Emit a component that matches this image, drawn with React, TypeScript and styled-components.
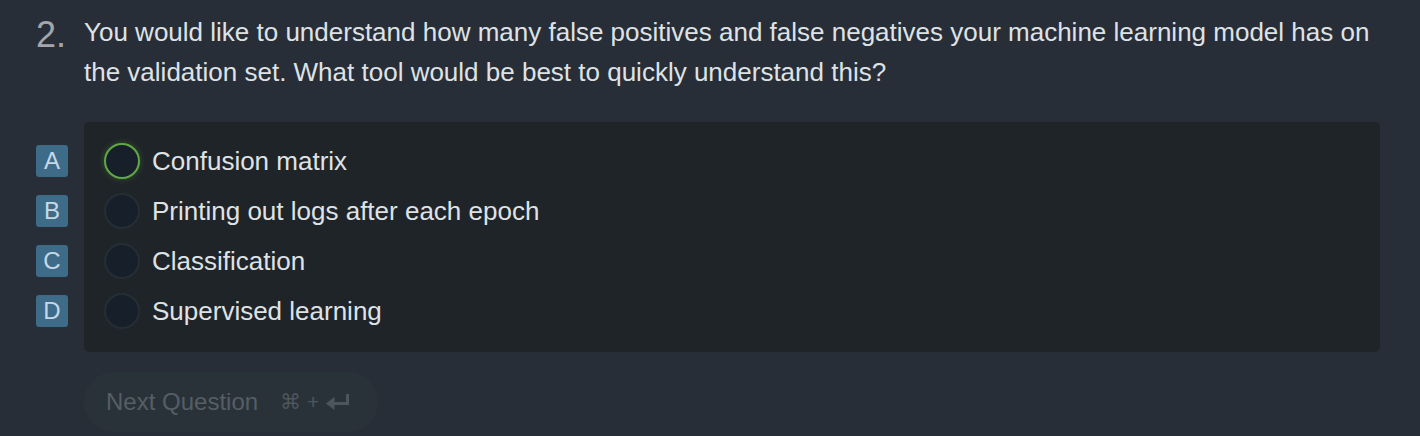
import React from "react";
import styled, { createGlobalStyle } from "styled-components";

const Global = createGlobalStyle`
  html, body { margin: 0; padding: 0; background: #282e37; }
  body { font-family: "Liberation Sans", Arial, Helvetica, sans-serif; }
`;

const Page = styled.div`
  padding: 12px 40px 0 36px;
  display: flex;
  flex-direction: column;
`;

const QuestionRow = styled.div`
  display: grid;
  grid-template-columns: 48px 1fr;
  align-items: start;
`;

const Number = styled.div`
  font-size: 36px;
  line-height: 40px;
  color: #a3a7ab;
  margin-top: 3px;
`;

const QuestionText = styled.p`
  margin: 0;
  font-size: 26px;
  line-height: 40px;
  color: #dfe2e5;
`;

const Options = styled.div`
  display: flex;
  margin-top: 30px;
`;

const Letters = styled.div`
  width: 48px;
  padding-top: 14px;
  display: flex;
  flex-direction: column;
`;

const LetterSlot = styled.div`
  height: 50px;
  display: flex;
  align-items: center;
`;

const Badge = styled.div`
  width: 32px;
  height: 32px;
  border-radius: 3px;
  background: #3e6b88;
  color: #c4d8e6;
  font-size: 24px;
  display: flex;
  align-items: center;
  justify-content: center;
`;

const Panel = styled.div`
  flex: 1;
  background: #1f2428;
  border-radius: 5px;
  padding: 14px 20px 16px;
  display: flex;
  flex-direction: column;
`;

const Row = styled.div`
  height: 50px;
  display: flex;
  align-items: center;
  gap: 12px;
`;

const Radio = styled.div<{ $selected?: boolean }>`
  width: 36px;
  height: 36px;
  box-sizing: border-box;
  border-radius: 50%;
  background: #17202a;
  border: 2px solid ${(p) => (p.$selected ? "#5fa844" : "#262e35")};
  box-shadow: ${(p) => (p.$selected ? "0 0 6px rgba(95,168,68,0.35)" : "none")};
`;

const OptionText = styled.span`
  font-size: 26px;
  color: #dfe2e5;
  margin-top: 1px;
`;

const Button = styled.button`
  margin: 20px 0 0 48px;
  align-self: flex-start;
  height: 60px;
  padding: 0 28px 0 22px;
  border: none;
  border-radius: 30px;
  background: #2a3239;
  display: flex;
  align-items: center;
  gap: 22px;
  font-family: "Liberation Sans", Arial, sans-serif;
  font-size: 24px;
  color: #555e65;
`;

const Shortcut = styled.span`
  display: flex;
  align-items: center;
  gap: 7px;
  font-size: 21px;
  color: #4d565d;
`;

const options = [
  { letter: "A", text: "Confusion matrix", selected: true },
  { letter: "B", text: "Printing out logs after each epoch" },
  { letter: "C", text: "Classification" },
  { letter: "D", text: "Supervised learning" },
];

function ReturnIcon() {
  return (
    <svg width="24" height="17" viewBox="0 0 24 17" fill="none">
      <path d="M21.5 0v9.5H6" stroke="#4d565d" strokeWidth="3" fill="none" />
      <path d="M0 9.5l8.5-6.5v13z" fill="#4d565d" />
    </svg>
  );
}

export default function App() {
  return (
    <>
      <Global />
      <Page>
        <QuestionRow>
          <Number>2.</Number>
          <QuestionText>
            You would like to understand how many false positives and false negatives your machine learning model has on the
            validation set. What tool would be best to quickly understand this?
          </QuestionText>
        </QuestionRow>
        <Options>
          <Letters>
            {options.map((o) => (
              <LetterSlot key={o.letter}>
                <Badge>{o.letter}</Badge>
              </LetterSlot>
            ))}
          </Letters>
          <Panel>
            {options.map((o) => (
              <Row key={o.letter}>
                <Radio $selected={o.selected} />
                <OptionText>{o.text}</OptionText>
              </Row>
            ))}
          </Panel>
        </Options>
        <Button>
          Next Question
          <Shortcut>
            ⌘ + <ReturnIcon />
          </Shortcut>
        </Button>
      </Page>
    </>
  );
}
